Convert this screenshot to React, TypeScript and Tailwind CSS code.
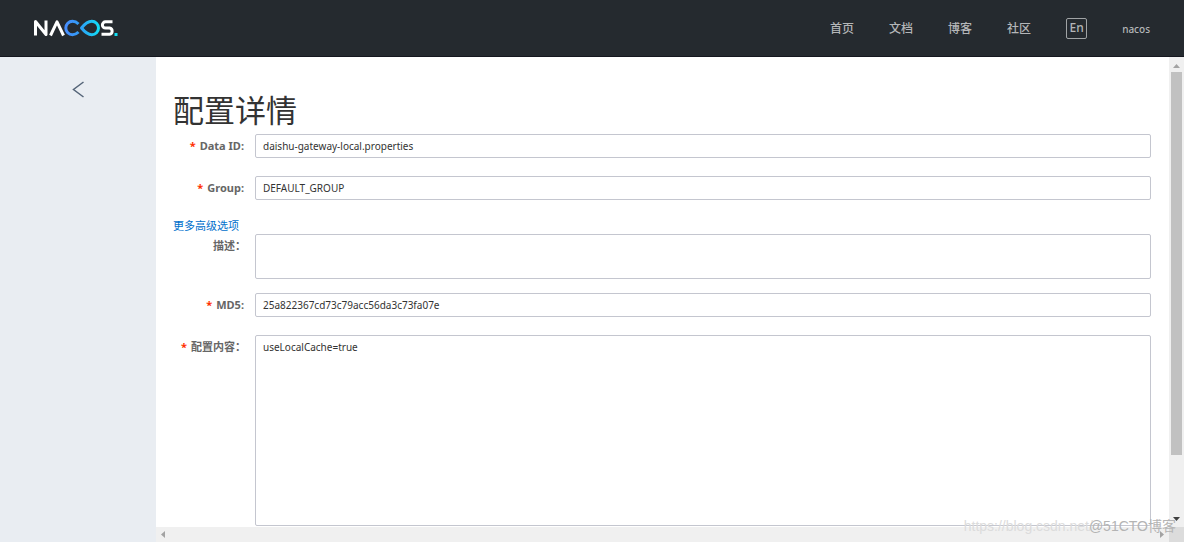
import { useState } from 'react'

type FieldProps = {
    id: string
    label: string
    required?: boolean
    cjk?: boolean
    children: React.ReactNode
}

const navItems = ['首页', '文档', '博客', '社区']

const inputStyle = 'block w-full h-6 px-[7px] rounded-[2px] border border-[#c4c6cf] bg-white text-[10px] text-[#333] outline-none focus:border-[#209bfa]'
const textareaStyle = 'block w-full px-[7px] py-1 rounded-[2px] border border-[#c4c6cf] bg-white text-[10px] text-[#333] leading-[14px] resize-none outline-none focus:border-[#209bfa]'

const Logo = () => (
    <svg width="86" height="20" viewBox="0 0 86 20" fill="none" aria-label="NACOS" role="img">
        <defs>
            <linearGradient id="loop" x1="31" y1="0" x2="67" y2="0" gradientUnits="userSpaceOnUse">
                <stop offset="0" stopColor="#4a8cff" />
                <stop offset="0.45" stopColor="#2f9df5" />
                <stop offset="1" stopColor="#10e0f5" />
            </linearGradient>
        </defs>
        <path d="M2.500 17.500V3.500L13 16.500V2.500" stroke="#fff" strokeWidth="3" strokeLinejoin="round" />
        <path d="M17.500 17.500L24 3.800L30.500 17.500" stroke="#fff" strokeWidth="3" strokeLinejoin="round" />
        <path d="M45.500 14C43.500 16 42 16.700 39.500 16.700A6.700 6.700 0 0 1 39.500 3.300C42 3.300 43.500 4 45.500 6M48.500 10C52.500 5 55 3.300 58.800 3.300A6.700 6.700 0 0 1 58.800 16.700C55 16.700 52.500 15 48.500 10Z" stroke="url(#loop)" strokeWidth="3" strokeLinejoin="round" />
        <path d="M79.500 3.800H72.500A3 3 0 0 0 72.500 10H76.500A3.200 3.200 0 0 1 76.500 16.300H68.500" stroke="#fff" strokeWidth="3" />
        <rect x="81.500" y="15" width="3" height="3" fill="#10e0f5" />
    </svg>
)

const Field = ({ id, label, required, cjk, children }: FieldProps) => (
    <div className="flex items-start">
        <label htmlFor={id} className={`w-[82px] shrink-0 text-right font-bold leading-6 text-[#666] ${cjk ? 'pr-[9px]' : 'pr-[11px]'}`}>
            {required && <span className="mr-1 text-[#ff3000]">*</span>}
            {label}
        </label>
        <div className="min-w-0 flex-1">{children}</div>
    </div>
)

const App = () => {
    const [dataId, setDataId] = useState<string>('daishu-gateway-local.properties')
    const [group, setGroup] = useState<string>('DEFAULT_GROUP')
    const [desc, setDesc] = useState<string>('')
    const [md5, setMd5] = useState<string>('25a822367cd73c79acc56da3c73fa07e')
    const [content, setContent] = useState<string>('useLocalCache=true')

    return (
        <div className="relative flex h-screen flex-col overflow-hidden bg-white font-['Noto_Sans','Noto_Sans_CJK_SC',sans-serif] text-[11px]">
            <header className="flex h-[57px] shrink-0 items-center justify-between border-b border-[#15171f] bg-[#252a2f] pl-[33px] pr-[34px]">
                <a href="#"><Logo /></a>
                <nav className="flex items-center gap-[35px] text-[#b4b6b8]">
                    {navItems.map((item) => (
                        <a key={item} href="#" className="pt-px text-[12px] font-medium">{item}</a>
                    ))}
                    <button type="button" className="h-[21px] w-[21px] rounded-[2px] border border-[#a0a3a5] text-[12px] font-medium leading-[18px]">En</button>
                    <a href="#" className="pt-[3px] text-[10px] font-medium">nacos</a>
                </nav>
            </header>
            <div className="flex min-h-0 flex-1">
                <aside className="w-[156px] shrink-0 bg-[#e9edf2]">
                    <button type="button" aria-label="Back" className="ml-[72px] mt-6 block">
                        <svg width="13" height="17" viewBox="0 0 13 17" fill="none" stroke="#546478" strokeWidth="1.500">
                            <path d="M11.500 1L1.500 8.500L11.500 16" />
                        </svg>
                    </button>
                </aside>
                <div className="flex min-w-0 flex-1 flex-col">
                    <main className="min-h-0 flex-1 overflow-hidden pl-[17px] pr-[18px] pt-8">
                        <h1 className="mb-[5px] text-[31px] leading-10 text-[#333] font-['Noto_Sans_CJK_SC',sans-serif]">配置详情</h1>
                        <form>
                            <div className="flex flex-col gap-[18px]">
                                <Field id="dataId" label="Data ID:" required>
                                    <input id="dataId" className={inputStyle} value={dataId} onChange={(e) => setDataId(e.target.value)} />
                                </Field>
                                <Field id="group" label="Group:" required>
                                    <input id="group" className={inputStyle} value={group} onChange={(e) => setGroup(e.target.value)} />
                                </Field>
                            </div>
                            <a href="#" className="mt-[18px] block leading-4 text-[#0070cc]">更多高级选项</a>
                            <div className="flex flex-col gap-[14px]">
                                <Field id="desc" label="描述：" cjk>
                                    <textarea id="desc" className={`${textareaStyle} h-[45px]`} value={desc} onChange={(e) => setDesc(e.target.value)} />
                                </Field>
                                <Field id="md5" label="MD5:" required>
                                    <input id="md5" className={inputStyle} value={md5} onChange={(e) => setMd5(e.target.value)} />
                                </Field>
                            </div>
                            <div className="mt-[18px]">
                                <Field id="content" label="配置内容：" required cjk>
                                    <textarea id="content" className={`${textareaStyle} h-[191px]`} value={content} onChange={(e) => setContent(e.target.value)} />
                                </Field>
                            </div>
                        </form>
                    </main>
                    <div className="flex h-[15px] shrink-0 items-center justify-between bg-[#f0f0f0] px-[5px]">
                        <svg width="4" height="7" viewBox="0 0 4 7" fill="#a3a3a3"><path d="M4 0V7L0 3.500Z" /></svg>
                        <svg width="4" height="7" viewBox="0 0 4 7" fill="#a3a3a3"><path d="M0 0V7L4 3.500Z" /></svg>
                    </div>
                </div>
                <div className="flex w-[15px] shrink-0 flex-col items-center bg-[#f0f0f0]">
                    <svg className="mb-1 mt-[7px] shrink-0" width="7" height="4" viewBox="0 0 7 4" fill="#a3a3a3"><path d="M0 4H7L3.500 0Z" /></svg>
                    <div className="h-[79%] w-[11px] bg-[#c1c1c1]" />
                    <div className="flex-1" />
                    <svg className="my-[6px] shrink-0" width="7" height="4" viewBox="0 0 7 4" fill="#404040"><path d="M0 0H7L3.500 4Z" /></svg>
                    <div className="h-[15px] w-full shrink-0 bg-[#dcdcdc]" />
                </div>
            </div>
            <div className="pointer-events-none absolute bottom-[6px] right-2 flex items-center font-['Liberation_Sans','Noto_Sans_CJK_SC',sans-serif] text-[14px] leading-5">
                <span className="-mr-1 text-[#dcdcdc]">https://blog.csdn.net/</span>
                <span className="text-[#b4b4b4]">@51CTO博客</span>
            </div>
        </div>
    )
}

export default App
